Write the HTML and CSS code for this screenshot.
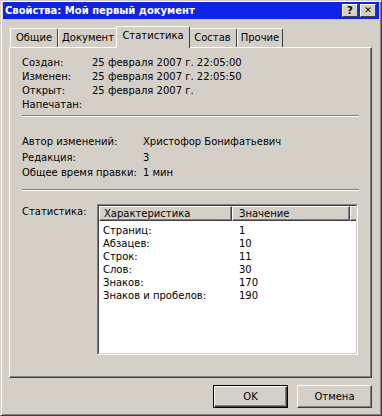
FILE: index.html
```html
<!DOCTYPE html>
<html lang="ru">
<head>
    <meta charset="UTF-8">
    <title>Свойства: Мой первый документ</title>
    <link rel="stylesheet" href="styles.css">
</head>
<body>
    <div class="window">
        <div class="title-bar">
            <span class="title">Свойства: Мой первый документ</span>
            <div class="title-buttons">
                <span class="tb-btn">?</span>
                <span class="tb-btn tb-close">&#x2715;</span>
            </div>
        </div>

        <div class="tabs">
            <span class="tab tab-general">Общие</span>
            <span class="tab tab-doc">Документ</span>
            <span class="tab tab-stats active">Статистика</span>
            <span class="tab tab-content">Состав</span>
            <span class="tab tab-other">Прочие</span>
        </div>

        <div class="panel">
            <div class="info dates">
                <span>Создан:</span><span>25 февраля 2007 г. 22:05:00</span>
                <span>Изменен:</span><span>25 февраля 2007 г. 22:05:50</span>
                <span>Открыт:</span><span>25 февраля 2007 г.</span>
                <span>Напечатан:</span><span></span>
            </div>
            <div class="separator"></div>
            <div class="info author">
                <span>Автор изменений:</span><span>Христофор Бонифатьевич</span>
                <span>Редакция:</span><span>3</span>
                <span>Общее время правки:</span><span>1 мин</span>
            </div>
            <div class="separator sep2"></div>

            <div class="stats">
                <span class="stats-label">Статистика:</span>
                <div class="listbox">
                    <div class="list-inner">
                        <div class="list-header">
                            <span class="col1">Характеристика</span>
                            <span class="col2">Значение</span>
                            <span class="col-rest"></span>
                        </div>
                        <div class="list-rows">
                            <span>Страниц:</span><span>1</span>
                            <span>Абзацев:</span><span>10</span>
                            <span>Строк:</span><span>11</span>
                            <span>Слов:</span><span>30</span>
                            <span>Знаков:</span><span>170</span>
                            <span>Знаков и пробелов:</span><span>190</span>
                        </div>
                    </div>
                </div>
            </div>
        </div>

        <div class="buttons">
            <span class="button default">OK</span>
            <span class="button">Отмена</span>
        </div>
    </div>
</body>
</html>
```

FILE: styles.css
```css
body {
    margin: 0;
    background-color: #d4d0c8;
    font-family: "DejaVu Sans", sans-serif;
    font-size: 10px;
    color: #000;
}

/* Window frame */
.window {
    width: 382px;
    height: 416px;
    box-sizing: border-box;
    border-top: 1px solid #d4d0c8;
    border-left: 1px solid #d4d0c8;
    border-right: 1px solid #404040;
    border-bottom: 1px solid #404040;
    box-shadow: inset 1px 1px 0 #fff, inset -1px -1px 0 #808080;
    padding: 1px 2px 2px 2px;
    display: flex;
    flex-direction: column;
}

.title-bar {
    height: 17px;
    background-color: #1024e8;
    display: flex;
    align-items: center;
    justify-content: space-between;
    padding: 0 3px 0 2px;
}

.title {
    color: #fff;
    font-weight: bold;
    font-size: 10px;
}

.title-buttons {
    display: flex;
    gap: 2px;
}

.tb-btn {
    width: 16px;
    height: 13px;
    box-sizing: border-box;
    background-color: #d4d0c8;
    border-top: 1px solid #fff;
    border-left: 1px solid #fff;
    border-right: 1px solid #404040;
    border-bottom: 1px solid #404040;
    font-weight: bold;
    font-size: 10px;
    line-height: 11px;
    text-align: center;
}

.tb-close {
    font-size: 9px;
}

/* Tabs */
.tabs {
    display: flex;
    align-items: flex-end;
    margin-top: 6px;
    padding-left: 7px;
    height: 22px;
}

.tab {
    height: 19px;
    line-height: 18px;
    text-align: center;
    border-top: 1px solid #fff;
    border-left: 1px solid #fff;
    border-right: 1px solid #404040;
    border-radius: 2px 2px 0 0;
    box-sizing: border-box;
    white-space: nowrap;
}

.tab-general { width: 48px; }
.tab-doc { width: 60px; }
.tab-stats { width: 74px; }
.tab-content { width: 49px; }
.tab-other { width: 46px; }

.tab.active {
    height: 22px;
    line-height: 18px;
    margin: 0 -2px -1px -2px;
    background-color: #d4d0c8;
    position: relative;
    z-index: 1;
}

/* Tab page */
.panel {
    margin: 0 7px 0 6px;
    height: 331px;
    box-sizing: border-box;
    border-top: 1px solid #fff;
    border-left: 1px solid #fff;
    border-right: 1px solid #404040;
    border-bottom: 1px solid #404040;
    box-shadow: inset -1px -1px 0 #808080;
    padding: 8px 12px 0 12px;
}

.info {
    display: grid;
    row-gap: 1px;
    line-height: 13px;
}

.dates {
    grid-template-columns: 70px 1fr;
}

.author {
    grid-template-columns: 121px 1fr;
    row-gap: 2.5px;
    margin-top: 18px;
}

.separator {
    height: 0;
    border-top: 1px solid #808080;
    border-bottom: 1px solid #fff;
    margin-top: 4px;
}

.sep2 {
    margin-top: 10px;
}

/* Statistics list */
.stats {
    display: flex;
    margin-top: 13px;
}

.stats-label {
    width: 75px;
    flex: none;
    padding-top: 2px;
}

.listbox {
    width: 261px;
    height: 151px;
    box-sizing: border-box;
    border-top: 1px solid #808080;
    border-left: 1px solid #808080;
    border-right: 1px solid #fff;
    border-bottom: 1px solid #fff;
}

.list-inner {
    height: 100%;
    box-sizing: border-box;
    background-color: #fff;
    border-top: 1px solid #404040;
    border-left: 1px solid #404040;
    border-right: 1px solid #d4d0c8;
    border-bottom: 1px solid #d4d0c8;
}

.list-header {
    display: flex;
    height: 15px;
    line-height: 13px;
}

.list-header span {
    box-sizing: border-box;
    background-color: #d4d0c8;
    border-top: 1px solid #fff;
    border-left: 1px solid #fff;
    border-right: 1px solid #404040;
    border-bottom: 1px solid #404040;
    box-shadow: inset -1px -1px 0 #808080;
    padding-left: 4px;
}

.list-header .col1 { width: 133px; }
.list-header .col2 { width: 118px; padding-left: 6px; }
.list-header .col-rest { flex: 1; border-right: none; box-shadow: inset 0 -1px 0 #808080; }

.list-rows {
    display: grid;
    grid-template-columns: 133px 1fr;
    line-height: 13px;
    padding-top: 3px;
}

.list-rows span {
    padding-left: 4px;
}

.list-rows span:nth-child(2n) {
    padding-left: 7px;
}

/* Dialog buttons */
.buttons {
    display: flex;
    justify-content: flex-end;
    gap: 9px;
    margin-top: 7px;
    padding-right: 7px;
}

.button {
    width: 75px;
    height: 23px;
    box-sizing: border-box;
    border-top: 1px solid #fff;
    border-left: 1px solid #fff;
    border-right: 1px solid #404040;
    border-bottom: 1px solid #404040;
    box-shadow: inset -1px -1px 0 #808080;
    display: flex;
    align-items: center;
    justify-content: center;
}

.button.default {
    border: 1px solid #000;
    box-shadow: inset 1px 1px 0 #fff, inset -1px -1px 0 #404040, inset -2px -2px 0 #808080;
}
```
